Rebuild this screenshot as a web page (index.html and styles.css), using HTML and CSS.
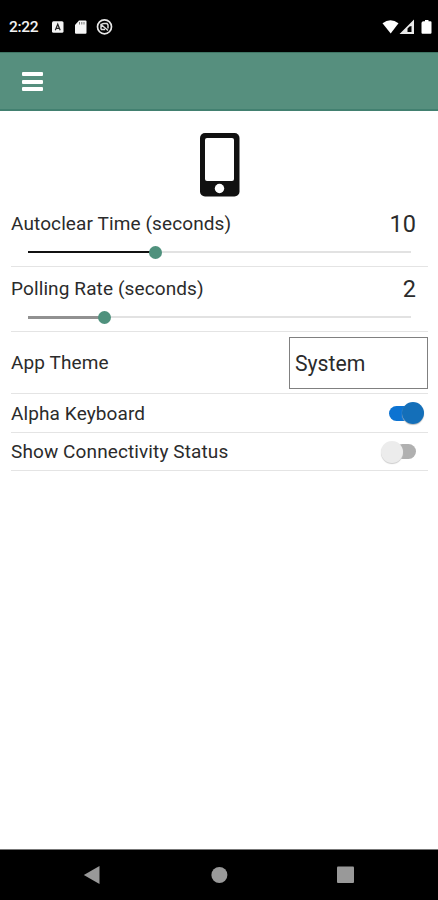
FILE: index.html
```html
<!DOCTYPE html>
<html lang="en">
<head>
<meta charset="utf-8">
<title>Settings</title>
<link rel="stylesheet" href="styles.css">
</head>
<body>
<div class="status">
  <span class="clock">2:22</span>
  <svg class="status-left" width="64" height="20" viewBox="0 0 64 20">
    <rect x="2" y="4.200" width="11.500" height="11.500" rx="1.500" fill="#f4f4f4"/>
    <path d="M5.300 13.200L7.750 7.200L10.200 13.200M6.200 11.300H9.300" fill="none" stroke="#222" stroke-width="1.200"/>
    <path d="M29 3.500H35.500Q36.500 3.500 36.500 4.500V15.700Q36.500 16.700 35.500 16.700H26Q25 16.700 25 15.700V8Z" fill="#f6f6f6"/>
    <path d="M29.500 5V7.500M31.800 5V7.500M34 5V7.500" stroke="#777" stroke-width="1"/>
    <circle cx="54.500" cy="9.800" r="7" fill="none" stroke="#e8e8e8" stroke-width="1.700"/>
    <path d="M51 12.500V8.500Q51.500 6.500 54 6.500H57L58 8V11.500M50.500 7L58 13.500M51 12.500H55" fill="none" stroke="#ddd" stroke-width="1.500"/>
  </svg>
  <svg class="status-right" width="50" height="20" viewBox="0 0 50 20">
    <path d="M.500 6.200Q8.500 .200 16.500 6.200L8.700 16.500Z" fill="#fff"/>
    <path fill-rule="evenodd" d="M32 2.500V17H17.500ZM27.500 9.500L25.500 11.500V15H29.500V9Z" fill="#e9e9e9"/>
    <path d="M41.500 4.300H43V3H46.500V4.300H48.500Q49.500 4.300 49.500 5.300V15.800Q49.500 16.800 48.500 16.800H40.500Q39.500 16.800 39.500 15.800V6Q39.500 4.300 41.500 4.300Z" fill="#fff"/>
  </svg>
</div>
<header class="bar"><div class="menu"><i></i><i></i><i></i></div></header>
<main>
  <svg class="phone" width="42" height="66" viewBox="0 0 42 66">
    <rect x="1" y="1" width="39.500" height="63.500" rx="5" fill="#111"/>
    <rect x="6" y="6" width="29" height="43" rx="2" fill="#fff"/>
    <circle cx="20.500" cy="56.500" r="4.700" fill="#fff"/>
  </svg>
  <section class="row range">
    <div class="line"><span class="label">Autoclear Time (seconds)</span><span class="value">10</span></div>
    <div class="track"><b class="fill" style="width:127px"></b><b class="thumb"></b></div>
  </section>
  <section class="row range">
    <div class="line"><span class="label">Polling Rate (seconds)</span><span class="value">2</span></div>
    <div class="track"><b class="fill soft" style="width:76px"></b><b class="thumb"></b></div>
  </section>
  <section class="row theme"><span class="label">App Theme</span><div class="select">System</div></section>
  <section class="row toggle"><span class="label">Alpha Keyboard</span><div class="switch on"></div></section>
  <section class="row toggle last"><span class="label">Show Connectivity Status</span><div class="switch"></div></section>
</main>
<nav>
  <svg width="18" height="20" viewBox="0 0 18 20"><path d="M.800 10L16.500 1V19Z" fill="#999"/></svg>
  <svg width="18" height="20" viewBox="0 0 18 20"><circle cx="9.400" cy="10" r="8" fill="#999"/></svg>
  <svg width="18" height="20" viewBox="0 0 18 20"><rect x="1" y="1.500" width="17" height="16.500" rx="1" fill="#999"/></svg>
</nav>
</body>
</html>
```
FILE: styles.css
```css
* { box-sizing: border-box; }
body {
  margin: 0;
  height: 900px;
  display: flex;
  flex-direction: column;
  background: #fff;
  color: #2b2b2b;
  font-family: Roboto, sans-serif;
  overflow: hidden;
}
svg { display: block; }
.status {
  height: 52px;
  background: #000;
  display: flex;
  align-items: flex-start;
  padding: 17px 6px 0 9px;
}
.clock {
  width: 41px;
  color: #f2f2f2;
  font-size: 15.500px;
  font-weight: 500;
  line-height: 21px;
  letter-spacing: -.3px;
}
.status-right { margin-left: auto; }
.bar {
  height: 59px;
  background: #568f7e;
  border-top: 1px solid #3f7665;
  border-bottom: 2px solid #428070;
  padding: 19px 22px;
}
.menu {
  width: 21px;
  display: flex;
  flex-direction: column;
  gap: 3.500px;
}
.menu i { height: 4px; border-radius: 1px; background: #fff; }
main { flex: 1; padding: 21px 10px 0 11px; }
.phone { margin: 0 auto 4px 188px; }
.row { border-bottom: 1px solid #e4e4e4; }
.range { height: 65px; }
.line {
  height: 42px;
  display: flex;
  align-items: center;
  justify-content: space-between;
  padding-right: 12px;
}
.label { font-size: 19px; letter-spacing: .11px; white-space: nowrap; }
.value { padding-top: 2px; font-size: 23.500px; line-height: 40px; }
.track {
  display: flex;
  align-items: center;
  width: 383px;
  height: 2px;
  margin: 7px 0 0 17px;
  background: #e2e2e2;
}
.fill { height: 2px; background: #111; }
.soft { height: 3px; background: #919191; }
.thumb {
  width: 13px;
  height: 13px;
  margin-left: -6px;
  border-radius: 50%;
  background: #4f917d;
}
.theme {
  height: 62px;
  display: flex;
  align-items: center;
  justify-content: space-between;
}
.select {
  width: 139px;
  height: 52px;
  border: 1px solid #808080;
  padding-left: 5px;
  font-size: 21.200px;
  line-height: 52px;
}
.toggle {
  height: 39px;
  display: flex;
  align-items: center;
  justify-content: space-between;
  padding-right: 4px;
}
.last { height: 38px; }
.switch {
  width: 43px;
  height: 22px;
  display: flex;
  align-items: center;
}
.switch::before {
  content: "";
  width: 22px;
  height: 22px;
  border-radius: 50%;
  background: #ececec;
  box-shadow: 0 1px 1px #ccc;
  z-index: 1;
}
.switch::after {
  content: "";
  width: 21px;
  height: 15px;
  margin-left: -8px;
  border-radius: 7.500px;
  background: #b0b0b0;
}
.on { flex-direction: row-reverse; }
.on::before { background: #146fb9; box-shadow: 0 1px 1px #bbb; }
.on::after { width: 25px; margin: 0 -12px 0 0; background: #0c73d2; }
nav {
  height: 51px;
  background: #000;
  border-top: 1px solid #777;
  display: flex;
  justify-content: space-between;
  padding: 15px 84px 0 83px;
}
```
